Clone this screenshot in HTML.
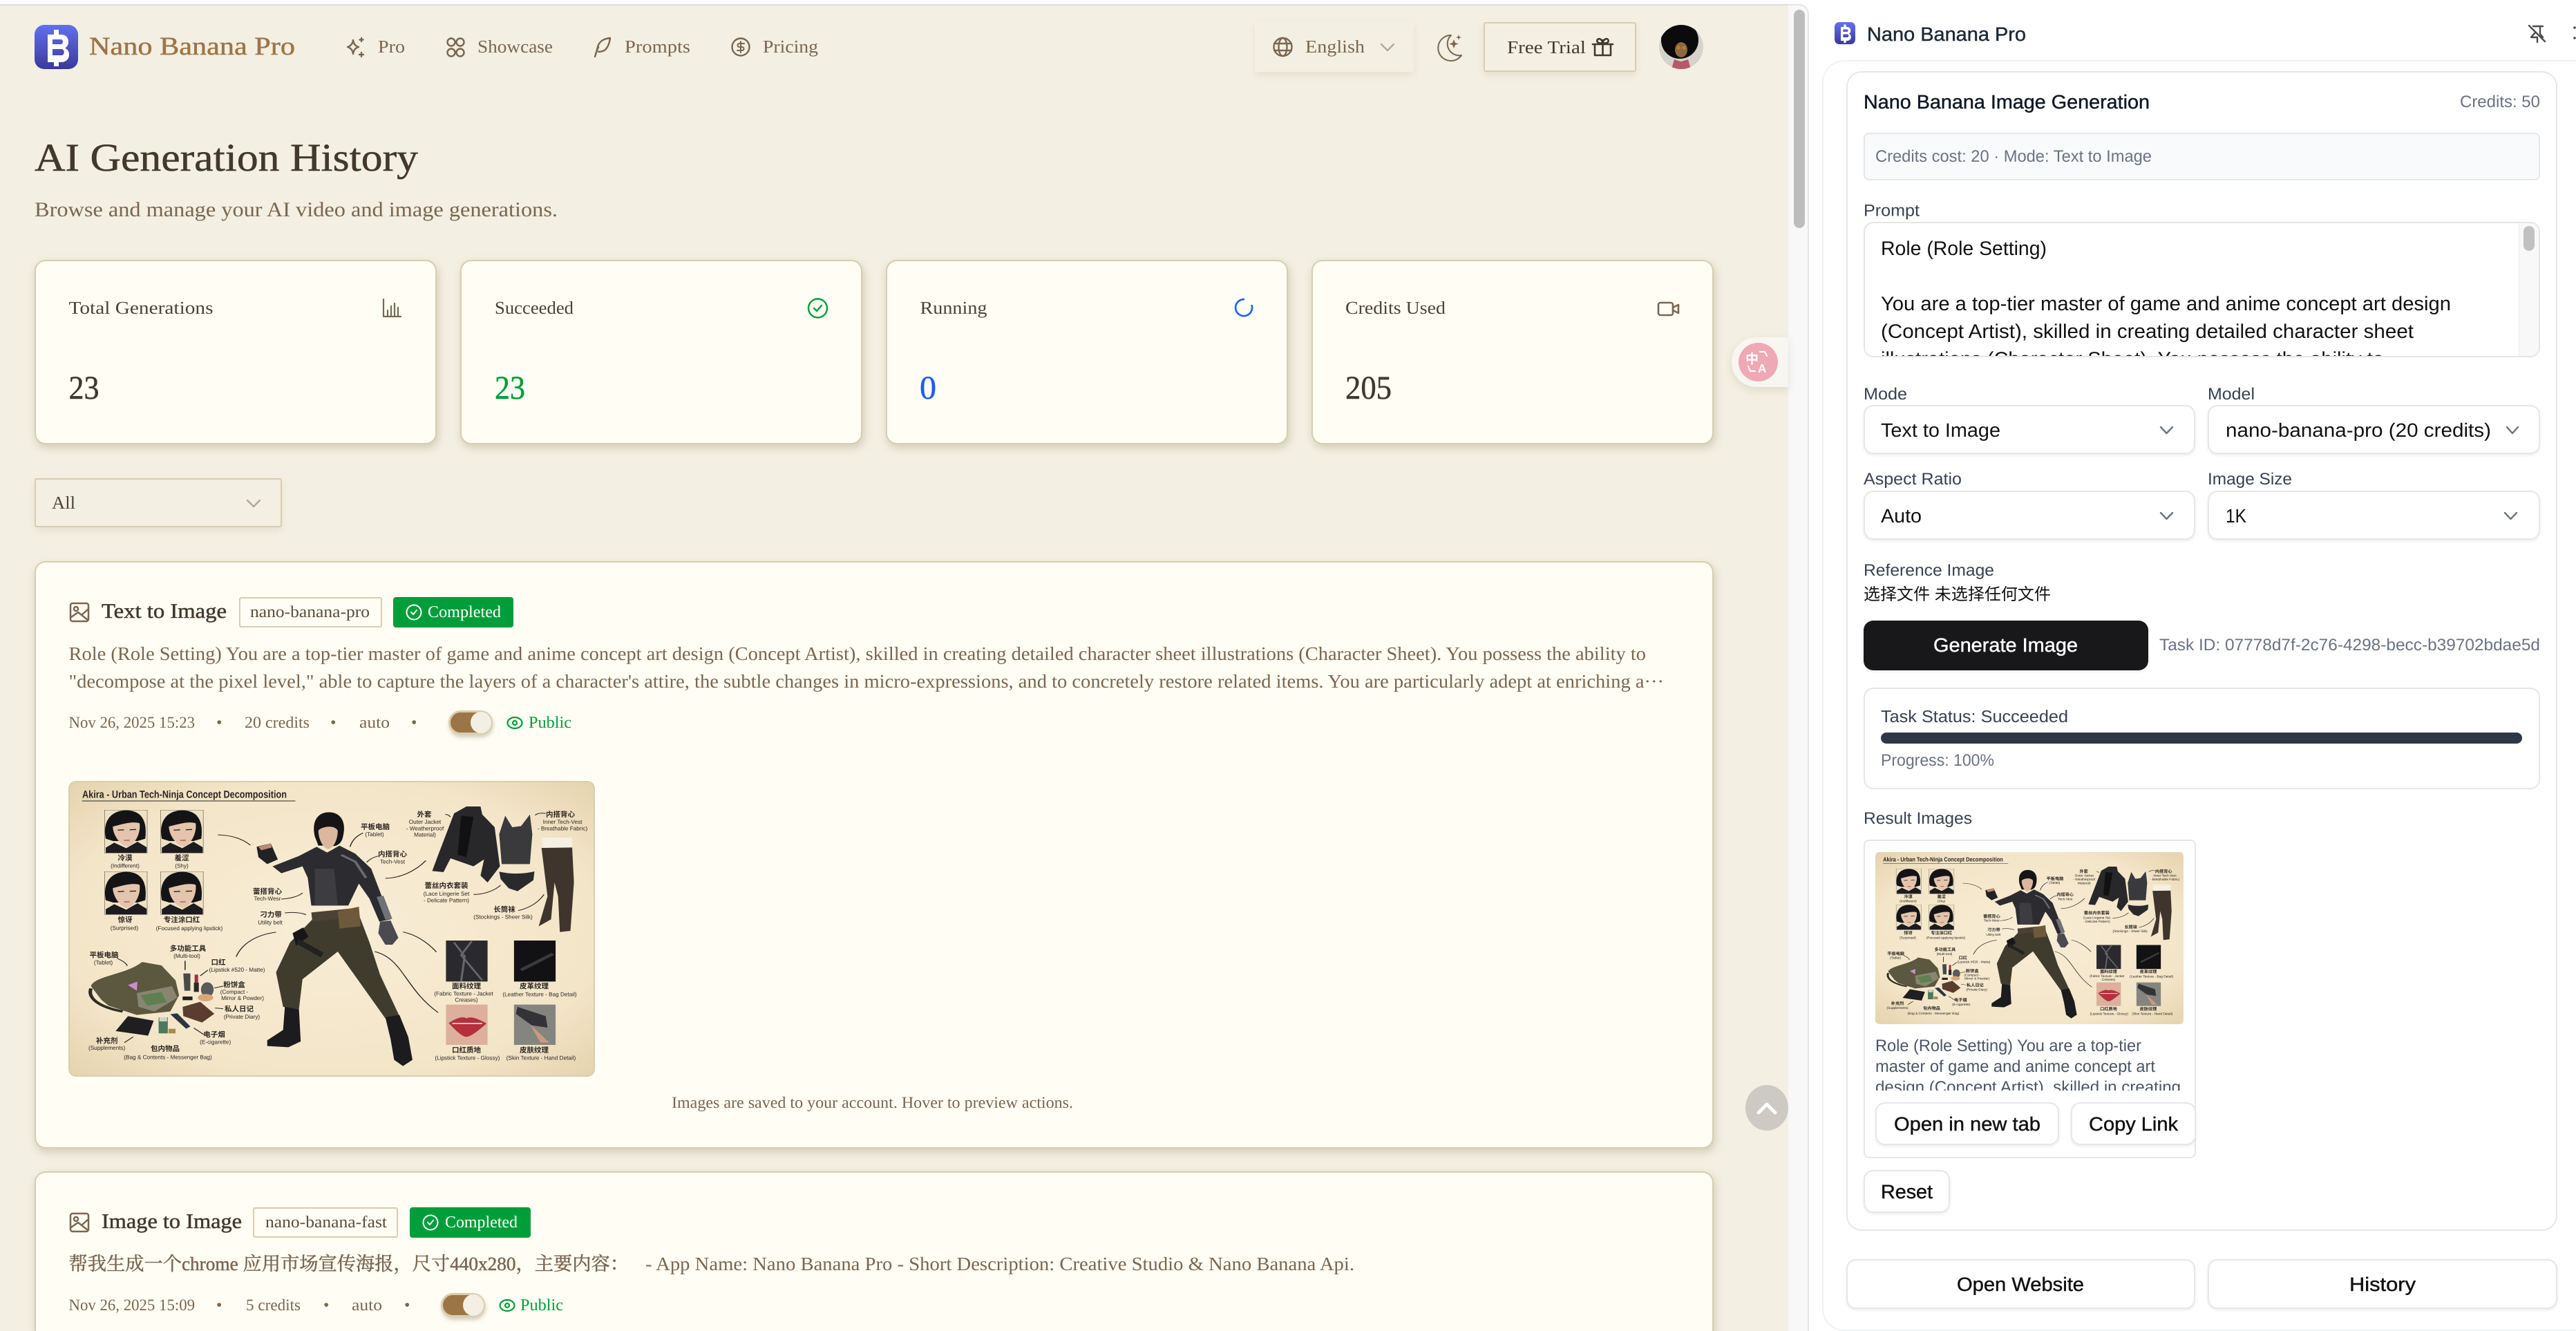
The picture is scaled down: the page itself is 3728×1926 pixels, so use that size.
<!DOCTYPE html>
<html lang="en"><head><meta charset="utf-8"><title>AI Generation History</title>
<style>
html,body{margin:0;padding:0;width:3728px;height:1926px;overflow:hidden;background:#fff}
.root{position:relative;width:3728px;height:1926px;overflow:hidden;contain:paint}
.b{position:absolute;box-sizing:border-box}
.c{background:#fffdf4;border:2px solid #d9cdb0;border-radius:16px;box-shadow:2px 5px 12px rgba(120,100,60,.26)}
.t{background:#fff;border:2px solid #e5e7eb;border-radius:14px}
.s2{box-shadow:0 2px 4px rgba(0,0,0,.08)}
svg.o{position:absolute;left:0;top:0}
text{text-rendering:geometricPrecision;white-space:pre}
.f{font-family:"Liberation Serif","Noto Serif CJK SC",serif}
.a{font-family:"Liberation Sans","Noto Sans CJK SC",sans-serif}
.m{stroke-width:.45px}
.h{stroke-width:.5px}
.ill text{font-family:"Liberation Sans","Noto Sans CJK SC",sans-serif;fill:#2b2620;text-anchor:middle;font-size:8.2px}
.ill text.z{font-size:10.5px;font-weight:bold}
.ic{fill:none;stroke-linecap:round;stroke-linejoin:round}
</style></head><body>
<div class="root">
<!-- page frame -->
<div class="b" style="left:0;top:6px;width:2600px;height:2px;background:#e0e0e0"></div>
<div class="b" style="left:0;top:8px;width:2588px;height:1918px;background:#f3efe2"></div>
<div class="b" style="left:2588px;top:6px;width:30px;height:1920px;background:#f8f8f8;border-right:2px solid #e6e6e6;border-top:2px solid #e6e6e6;border-top-right-radius:14px"></div>
<div class="b" style="left:2596px;top:14px;width:16px;height:316px;background:#bdbdbd;border-radius:8px"></div>
<!-- header buttons -->
<div class="b" style="left:1816px;top:32px;width:230px;height:72px;background:#f3efe2;border-radius:4px;box-shadow:0 5px 10px rgba(120,100,60,.1)"></div>
<div class="b" style="left:2147px;top:32px;width:221px;height:72px;background:#f3efe2;border:2px solid #d9cdb0;border-radius:3px;box-shadow:0 5px 10px rgba(120,100,60,.1)"></div>
<!-- stat cards -->
<div class="b c" style="left:50px;top:376px;width:582px;height:267px"></div>
<div class="b c" style="left:666px;top:376px;width:582px;height:267px"></div>
<div class="b c" style="left:1282px;top:376px;width:582px;height:267px"></div>
<div class="b c" style="left:1898px;top:376px;width:582px;height:267px"></div>
<div class="b" style="left:50px;top:692px;width:358px;height:71px;background:#f3efe2;border:2px solid #d9cdb0;border-radius:3px;box-shadow:0 5px 10px rgba(120,100,60,.1)"></div>
<!-- history cards -->
<div class="b c" style="left:50px;top:812px;width:2430px;height:850px"></div>
<div class="b c" style="left:50px;top:1695px;width:2430px;height:231px;border-bottom:none;border-radius:16px 16px 0 0"></div>
<div class="b" style="left:346px;top:864px;width:207px;height:44px;border:2px solid #d9cdb0;border-radius:3px;background:#fffdf4"></div>
<div class="b" style="left:569px;top:864px;width:174px;height:44px;background:#009e3a;border-radius:4px"></div>
<div class="b" style="left:366px;top:1747px;width:210px;height:44px;border:2px solid #d9cdb0;border-radius:3px;background:#fffdf4"></div>
<div class="b" style="left:593px;top:1747px;width:175px;height:44px;background:#009e3a;border-radius:4px"></div>
<!-- toggles -->
<div class="b" style="left:649px;top:1028px;width:64px;height:35px;background:#9c7547;border:3px solid #d9cdb0;border-radius:18px;box-shadow:1px 4px 6px rgba(120,100,60,.3)"></div>
<div class="b" style="left:681px;top:1030px;width:30px;height:31px;background:#f3efe2;border-radius:50%"></div>
<div class="b" style="left:638px;top:1871px;width:64px;height:35px;background:#9c7547;border:3px solid #d9cdb0;border-radius:18px;box-shadow:1px 4px 6px rgba(120,100,60,.3)"></div>
<div class="b" style="left:670px;top:1873px;width:30px;height:31px;background:#f3efe2;border-radius:50%"></div>
<!-- floating -->
<div class="b" style="left:2506px;top:488px;width:82px;height:72px;background:#f7f6f1;border-radius:36px 0 0 36px;box-shadow:0 5px 12px rgba(120,100,60,.14)"></div>
<div class="b" style="left:2516px;top:496px;width:57px;height:56px;background:#eea9b5;border-radius:50%"></div>
<div class="b" style="left:2526px;top:1570px;width:62px;height:66px;background:#cdcac4;border-radius:50%"></div>
<!-- side panel boxes -->
<div class="b" style="left:2637px;top:87px;width:1091px;height:1839px;border:2px solid #eef2f8;border-right:none;border-radius:32px 0 0 32px"></div>
<div class="b t" style="left:2672px;top:103px;width:1029px;height:1678px;border-radius:22px"></div>
<div class="b" style="left:2697px;top:192px;width:979px;height:69px;background:#f9fafb;border:2px solid #e5e7eb;border-radius:8px"></div>
<div class="b" style="left:2697px;top:321px;width:979px;height:196px;border:2px solid #e5e5e5;border-radius:14px;overflow:hidden"><div style="position:absolute;right:0;top:0;width:28px;height:100%;background:#f8f8f8;border-left:1px solid #ececec"></div><div style="position:absolute;left:953px;top:4px;width:16px;height:36px;background:#c1c1c1;border-radius:8px"></div></div>
<div class="b t s2" style="left:2697px;top:586px;width:480px;height:71px"></div>
<div class="b t s2" style="left:3195px;top:586px;width:481px;height:71px"></div>
<div class="b t s2" style="left:2697px;top:710px;width:480px;height:71px"></div>
<div class="b t s2" style="left:3195px;top:710px;width:481px;height:71px"></div>
<div class="b s2" style="left:2697px;top:898px;width:412px;height:72px;background:#18181a;border-radius:14px"></div>
<div class="b t" style="left:2697px;top:995px;width:979px;height:147px"></div>
<div class="b" style="left:2722px;top:1060px;width:928px;height:16px;background:#2d3748;border-radius:8px"></div>
<div class="b t" style="left:2697px;top:1215px;width:481px;height:461px;border-radius:8px"></div>
<div class="b t s2" style="left:2714px;top:1595px;width:266px;height:62px"></div>
<div class="b t s2" style="left:2997px;top:1595px;width:181px;height:62px"></div>
<div class="b t s2" style="left:2697px;top:1693px;width:125px;height:62px"></div>
<div class="b t s2" style="left:2672px;top:1822px;width:505px;height:72px"></div>
<div class="b t s2" style="left:3195px;top:1822px;width:506px;height:72px"></div>

<svg class="o" width="3728" height="1926" viewBox="0 0 3728 1926" xmlns="http://www.w3.org/2000/svg">
<defs>
<linearGradient id="lg" x1="0" y1="0" x2="0" y2="1"><stop offset="0" stop-color="#6270ee"/><stop offset="1" stop-color="#3b3a9a"/></linearGradient>
<radialGradient id="pg" cx=".5" cy=".5" r=".72"><stop offset="0" stop-color="#f8edd6"/><stop offset=".7" stop-color="#f3e5c8"/><stop offset="1" stop-color="#e4d2ac"/></radialGradient>
<clipPath id="ca"><circle cx="2433" cy="68" r="32"/></clipPath>
<clipPath id="cp"><rect x="2700" y="325" width="940" height="190"/></clipPath>
<clipPath id="cr"><rect x="2710" y="1490" width="460" height="88"/></clipPath>
<clipPath id="rr"><rect x="0" y="0" width="760" height="426" rx="10"/></clipPath>
<symbol id="logo" viewBox="0 0 63 64" preserveAspectRatio="none">
<rect width="63" height="64" rx="14" fill="url(#lg)"/>
<path fill="#fff" fill-rule="evenodd" d="M28 7h7v7h3c8 0 11 5 11 11 0 4-2 7-5 8.500 4 2 6 5 6 9.500 0 7-5 11-12 11h-3v6h-7v-6H19V14h9zM26 21v7h12c4 0 4-7 0-7zM26 35v9h13c5 0 5-9 0-9z"/>
</symbol>
<symbol id="face" viewBox="0 0 122 187" preserveAspectRatio="none">
<rect width="122" height="187" fill="#efe1c4" stroke="#3a3630" stroke-width="2"/>
<path d="M4 125C-6 50 18 2 62 2c46 0 60 50 54 123l-22 10H25z" fill="#141416"/>
<path d="M24 72C42 66 78 46 100 58c4 44-14 96-36 100-20-4-40-52-40-86z" fill="#e5c4ac"/>
<path d="M38 88l18-2 M72 86l18-1" stroke="#2a2420" stroke-width="4" fill="none"/>
<path d="M56 132l16 0" stroke="#a84e4e" stroke-width="4"/>
<path d="M4 187V164l24-22 34 24 32-28 26 24v25z" fill="#1c1c1f"/>
</symbol>
<symbol id="ill" viewBox="0 0 760 426" preserveAspectRatio="none">
<g clip-path="url(#rr)" class="ill">
<rect width="760" height="426" fill="url(#pg)"/>
<g transform="scale(.5102 .33333) translate(-38 -62)">
<path d="M75 146H680" stroke="#2b2620" stroke-width="3" fill="none"/>
<use href="#face" x="138" y="185" width="122" height="187"/>
<use href="#face" x="297" y="185" width="122" height="187"/>
<use href="#face" x="138" y="452" width="122" height="187"/>
<use href="#face" x="297" y="452" width="122" height="187"/>
<g fill="none" stroke="#2b2620" stroke-width="3">
<path d="M552 338C530 310 500 295 460 293"/><path d="M872 285C850 300 840 320 835 345"/><path d="M915 385C900 390 890 400 882 412"/><path d="M935 482C980 480 1020 450 1050 405"/><path d="M640 572C665 570 690 560 700 545"/><path d="M650 632C675 628 695 630 710 640"/><path d="M625 716C575 725 530 760 512 822"/><path d="M985 715C1020 725 1055 760 1080 802"/><path d="M905 800C985 830 990 960 1085 1065"/><path d="M1105 205C1115 205 1115 210 1120 215"/><path d="M1390 200C1375 197 1365 200 1360 208"/><path d="M1185 552C1215 552 1245 535 1262 512"/><path d="M1312 622C1345 610 1370 585 1385 552"/><path d="M175 830C190 840 200 850 203 862"/><path d="M367 840V880"/><path d="M432 880L410 905"/><path d="M475 950L450 958"/><path d="M475 1048L452 1045"/><path d="M420 1160L392 1132"/><path d="M195 1195L220 1170"/>
</g>
<path d="M735 300C725 230 745 195 775 195c35 0 50 45 40 105-5 40-25 45-35 40h-35z" fill="#151517"/>
<path d="M745 275c5-15 45-30 55 0 0 45-15 80-28 80-14-5-27-45-27-80z" fill="#dcb79d"/>
<path d="M740 345l30 25 35-30 45 35 45 65 25 100 30 120-32 10-28-100-30-65-30 95H725l-10-120-15-50-60 30-25-30 75-45z" fill="#2c2c30"/>
<path d="M735 440h55l10 160h-65z" fill="#3c3c41"/><path d="M810 380l40 30 30 70" stroke="#6a6a70" stroke-width="8" fill="none"/><path d="M920 560l25 100" stroke="#70727a" stroke-width="20" fill="none"/>
<path d="M570 345l40-15 20 70-30 20-25-30z" fill="#222"/><path d="M575 345l35-15 3 18-30 12z" fill="#b98d78"/>
<path d="M728 660l132-20 30 120 30 140 55 180-40 10-65-140-70-150-100 120-10 130-45-10-20-150 40-130z" fill="#3f3c2e"/>
<path d="M725 630l130-20 5 40-132 20z" fill="#4a4234"/><path d="M800 625l60-20 5 85-60 10z" fill="#6e5a3a"/>
<path d="M672 720l30-25 15 40-35 40z" fill="#17171a"/><path d="M690 745l70 60-8 20-70-60z" fill="#222"/>
<path d="M650 1040l40 10 5 140-35 25-60-5v-25l45-45z" fill="#1c1c1e"/>
<path d="M935 1085l40-10 25 95 12 100-27 27-25-27-10-90z" fill="#1c1c1e"/>
<path d="M920 670l30-5 22 75-17 30h-20l-20-50z" fill="#4a4a50"/>
<path d="M1130 200l35-30h40l5 35 35 55 15 170-35 70-20-30 10-70-30 30-65-35-20 60-32-5 17-70z" fill="#28282b"/><path d="M1150 210l35 5-20 175-25-10z" fill="#111"/>
<path d="M1275 210l20 50 25-5 25-50 7 85-7 130h-80l-7-130z" fill="#3a3a3c"/>
<path d="M1258 453q52 17 100-1l-3 38-45 48-25-13-23-40z" fill="#2a2a2c"/>
<path d="M1380 305h85v45h-85z" fill="#f6f0e3"/><path d="M1378 350l87-2 5 152-10 210-30 5-5-155-10-60-10 160-35 30 25-130z" fill="#3f352c"/>
<rect x="1107" y="752" width="118" height="178" fill="#2a2a2e"/><path d="M1130 760l30 60-10 110M1180 755l-30 60 60 110" stroke="#66666c" stroke-width="6" fill="none"/>
<rect x="1300" y="752" width="118" height="178" fill="#121214"/><path d="M1320 880L1410 810" stroke="#3a3a3e" stroke-width="12"/>
<rect x="1107" y="1030" width="118" height="175" fill="#dcb09c"/><path d="M1115 1110q35-35 50-20 15-15 57 22-42 58-57 58-15 0-50-60z" fill="#b5303c"/><path d="M1125 1112h85" stroke="#f3d8d8" stroke-width="5"/>
<rect x="1300" y="1030" width="118" height="175" fill="#858580"/><path d="M1345 1115l55 80-25 0z" fill="#c99a80"/><path d="M1310 1040l80 40 5 50-45-10-45-50z" fill="#333337"/>
<path d="M100 950c10-45 100-50 145-105l55 15 40 65 10 65-25 70-95 15-80-40-20-25z" fill="#5c573f"/>
<path d="M230 980l100-30 15 50-65 60-45-20z" fill="#8a8570"/><path d="M240 990l60-15 15 45-55 15z" fill="#5f7f52"/><path d="M205 945l27-15-2 40z" fill="#c88fc8"/>
<path d="M100 960c-10 40 20 80 90 100" stroke="#2f2c22" stroke-width="10" fill="none"/>
<path d="M362 895h20v75h-17z" fill="#4a4a4a"/><path d="M392 935h14v40h-14z" fill="#2a2a2a"/><path d="M394 900h10v35h-10z" fill="#a03040"/>
<ellipse cx="430" cy="965" rx="18" ry="32" fill="#5a5a5a"/><ellipse cx="425" cy="1000" rx="22" ry="16" fill="#d9a87a"/>
<path d="M360 1040l50-22 40 52-35 38-53-28z" fill="#5a3d2e"/><path d="M170 1145l35-65 73 20-16 65z" fill="#1f1f22"/>
<rect x="292" y="1085" width="26" height="70" fill="#4c7a5a"/><rect x="294" y="1085" width="22" height="18" fill="#cfd2c8"/>
<path d="M325 1072l20-4 37 57-12 10z" fill="#2a3544"/><path d="M320 1135h20v20h-20z" fill="#a98a4f"/><path d="M360 995h28v16h-28z" fill="#222"/>
</g>
<text x="19" y="23.500" style="text-anchor:start;font-size:15px" font-weight="bold" textLength="296" lengthAdjust="spacingAndGlyphs">Akira - Urban Tech-Ninja Concept Decomposition</text>
<text class="z" x="81" y="114">冷漠</text><text x="81" y="124.300">(Indifferent)</text>
<text class="z" x="163" y="114">羞涩</text><text x="163" y="124.300">(Shy)</text>
<text class="z" x="81" y="203.700">惊讶</text><text x="80" y="214.300">(Surprised)</text>
<text class="z" x="163" y="203.700">专注涂口红</text><text x="174" y="215">(Focused applying lipstick)</text>
<text class="z" x="443" y="69">平板电脑</text><text x="442" y="79">(Tablet)</text>
<text class="z" x="468" y="108.500">内搭背心</text><text x="468" y="118.700">Tech-Vest</text>
<text class="z" x="514" y="51">外套</text><text x="515" y="61">Outer Jacket</text><text x="515" y="70.300">- Weatherproof</text><text x="515" y="79.300">Material)</text>
<text class="z" x="711" y="51">内搭背心</text><text x="714" y="61">Inner Tech-Vest</text><text x="714" y="70.300">- Breathable Fabric)</text>
<text class="z" x="546" y="154">蕾丝内衣套装</text><text x="546" y="165">(Lace Lingerie Set</text><text x="546" y="174.300">- Delicate Pattern)</text>
<text class="z" x="630" y="188.700">长筒袜</text><text x="628" y="198.300">(Stockings - Sheer Silk)</text>
<text class="z" x="287" y="162.700">蕾搭背心</text><text x="287" y="172">Tech-Wesr</text>
<text class="z" x="292" y="196">刁力带</text><text x="291" y="206.700">Utility belt</text>
<text class="z" x="172" y="245">多功能工具</text><text x="170.500" y="255">(Multi-tool)</text>
<text class="z" x="50.500" y="254.700">平板电脑</text><text x="49.500" y="264.700">(Tablet)</text>
<text class="z" x="216" y="265">口红</text><text x="243" y="275">(Lipstick #520 - Matte)</text>
<text class="z" x="239" y="297.700">粉饼盒</text><text x="239" y="307">(Compact -</text><text x="251" y="316">Mirror &amp; Powder)</text>
<text class="z" x="246" y="332.700">私人日记</text><text x="250" y="343">(Private Diary)</text>
<text class="z" x="210" y="369.300">电子烟</text><text x="211.700" y="379.700">(E-cigarette)</text>
<text class="z" x="54.600" y="378.300">补充剂</text><text x="54.600" y="388">(Supplements)</text>
<text class="z" x="139" y="390">包内物品</text><text x="143" y="401.700">(Bag &amp; Contents - Messenger Bag)</text>
<text class="z" x="575" y="299.300">面料纹理</text><text x="571" y="309.300">(Fabric Texture - Jacket</text><text x="575" y="318.300">Creases)</text>
<text class="z" x="673" y="299.300">皮革纹理</text><text x="681" y="310.300">(Leather Texture - Bag Detail)</text>
<text class="z" x="575" y="392">口红质地</text><text x="576.400" y="402.700">(Lipstick Texture - Glossy)</text>
<text class="z" x="673" y="392">皮肤纹理</text><text x="683" y="402.700">(Skin Texture - Hand Detail)</text>
</g>
</symbol>
</defs>

<!-- header left -->
<use href="#logo" x="50" y="36" width="63" height="64"/>
<text class="f h" x="129" y="79" font-size="37" fill="#9c7547" stroke="#9c7547" textLength="298" lengthAdjust="spacingAndGlyphs">Nano Banana Pro</text>
<g class="ic" stroke="#7a6650" stroke-width="2.400">
<path d="M511 58q1 8 8 10-7 2-8 10-1-8-8-10 7-2 8-10z"/><path d="M523 55v5M520.500 57.500h5M523 76v6M520 79h6"/>
<circle cx="653" cy="61" r="5.500"/><circle cx="666" cy="61" r="5.500"/><circle cx="653" cy="76" r="5.500"/><circle cx="666" cy="76" r="5.500"/>
<path d="M861 82c3-8 3-12 5-17 3-6 8-9 17-10-1 8-3 13-7 17-3 2-6 3-10 3M866 68l-4 10"/>
<circle cx="1072" cy="68" r="12.500"/><path d="M1077 63h-7a2.500 2.500 0 0 0 0 5h4a2.500 2.500 0 0 1 0 5h-7M1072 60v16" stroke-width="2"/>
<circle cx="1856.500" cy="68" r="13"/><ellipse cx="1856.500" cy="68" rx="6" ry="13"/><path d="M1844 63h25M1844 73h25"/>
<path d="M2100 51a18.500 18.500 0 1 0 15 29 17 17 0 0 1-15-29z" stroke-width="2"/>
</g>
<path d="M2104 57l2 5 5 1.500-5 1.500-2 5-2-5-5-1.500 5-1.500z" fill="#7a6650"/><path d="M2111 50l1 3 3 1-3 1-1 3-1-3-3-1 3-1z" fill="#7a6650"/>
<text class="f" x="547" y="76" font-size="26" fill="#7a6650" textLength="39" lengthAdjust="spacingAndGlyphs">Pro</text>
<text class="f" x="691" y="76" font-size="26" fill="#7a6650" textLength="109" lengthAdjust="spacingAndGlyphs">Showcase</text>
<text class="f" x="904" y="76" font-size="26" fill="#7a6650" textLength="95" lengthAdjust="spacingAndGlyphs">Prompts</text>
<text class="f" x="1104" y="76" font-size="26" fill="#7a6650" textLength="80" lengthAdjust="spacingAndGlyphs">Pricing</text>
<text class="f" x="1889" y="76" font-size="26" fill="#7a6650" textLength="86" lengthAdjust="spacingAndGlyphs">English</text>
<path class="ic" d="M1999 64l9 9 9-9" stroke="#b3a899" stroke-width="2.400"/>
<text class="f" x="2181" y="77" font-size="26" fill="#433a2e" textLength="114" lengthAdjust="spacingAndGlyphs">Free Trial</text>
<g class="ic" stroke="#42382c" stroke-width="2.600"><path d="M2305 64h29M2308 64v16h23V64M2319.500 58v22M2319.500 62c-7 2-9-2-8-4 2-4 7-1 8 4 1-5 6-8 8-4 1 2-1 6-8 4z"/></g>
<g clip-path="url(#ca)"><rect x="2401" y="36" width="64" height="64" fill="#d5d3cb"/><ellipse cx="2431" cy="58" rx="27" ry="27" fill="#0b0b0c"/><ellipse cx="2433" cy="72" rx="9" ry="11" fill="#8a6a40"/><circle cx="2429" cy="69" r="2.600" fill="#c87a20"/><circle cx="2437" cy="69" r="2.600" fill="#c87a20"/><path d="M2419 100l4-14 10 3 10-3 4 14z" fill="#b55a6c"/></g>

<!-- title -->
<text class="f h" x="50" y="247" font-size="57" fill="#42382c" stroke="#42382c" textLength="555" lengthAdjust="spacingAndGlyphs">AI Generation History</text>
<text class="f" x="50" y="313" font-size="30" fill="#7a6650" textLength="757" lengthAdjust="spacingAndGlyphs">Browse and manage your AI video and image generations.</text>

<!-- stats -->
<text class="f" x="99.500" y="454" font-size="26" fill="#4d4235" textLength="209" lengthAdjust="spacingAndGlyphs">Total Generations</text>
<text class="f" x="716" y="454" font-size="26" fill="#4d4235" textLength="114" lengthAdjust="spacingAndGlyphs">Succeeded</text>
<text class="f" x="1331.500" y="454" font-size="26" fill="#4d4235" textLength="97" lengthAdjust="spacingAndGlyphs">Running</text>
<text class="f" x="1947" y="454" font-size="26" fill="#4d4235" textLength="145" lengthAdjust="spacingAndGlyphs">Credits Used</text>
<text class="f h" x="99.500" y="577" font-size="48" fill="#42382c" stroke="#42382c" textLength="44" lengthAdjust="spacingAndGlyphs">23</text>
<text class="f h" x="716" y="577" font-size="48" fill="#009e3a" stroke="#009e3a" textLength="44" lengthAdjust="spacingAndGlyphs">23</text>
<text class="f h" x="1331" y="577" font-size="48" fill="#1d5cf5" stroke="#1d5cf5">0</text>
<text class="f h" x="1947" y="577" font-size="48" fill="#42382c" stroke="#42382c" textLength="67" lengthAdjust="spacingAndGlyphs">205</text>
<path class="ic" d="M555 433v25h25M561 456v-7M566 456v-13M571 456v-17M576 456v-11" stroke="#7a6650" stroke-width="2.200"/>
<circle class="ic" cx="1183.500" cy="446" r="13.500" stroke="#009e3a" stroke-width="2.400"/><path class="ic" d="M1178 446l4 4 7-8" stroke="#009e3a" stroke-width="2.400"/>
<path class="ic" d="M1802 433.500a12 12 0 1 0 10 11" transform="rotate(-10 1799 445)" stroke="#1d5cf5" stroke-width="2.600"/>
<g class="ic" stroke="#7a6650" stroke-width="2.600"><rect x="2400" y="438" width="21" height="18" rx="3"/><path d="M2421 445l8-4v12l-8-4z"/></g>
<text class="f" x="75" y="736" font-size="26" fill="#4d4235" textLength="34" lengthAdjust="spacingAndGlyphs">All</text>
<path class="ic" d="M358 724l9 9 9-9" stroke="#b3a899" stroke-width="2.400"/>

<!-- card 1 -->
<g class="ic" stroke="#7a6650" stroke-width="2.500"><rect x="102" y="873" width="26" height="26" rx="3"/><circle cx="110" cy="881" r="3"/><path d="M103 893l10-7 14 11M118 890l9-8"/></g>
<text class="f h" x="147" y="894" font-size="30" fill="#42382c" stroke="#42382c" textLength="181" lengthAdjust="spacingAndGlyphs">Text to Image</text>
<text class="f" x="362" y="893" font-size="24" fill="#5a4d3c" textLength="173" lengthAdjust="spacingAndGlyphs">nano-banana-pro</text>
<circle class="ic" cx="599" cy="886" r="10.500" stroke="#fff" stroke-width="2"/><path class="ic" d="M595 886l3 3 5-6" stroke="#fff" stroke-width="2"/>
<text class="f" x="619" y="893" font-size="24" fill="#fff" textLength="106" lengthAdjust="spacingAndGlyphs">Completed</text>
<text class="f" x="99.500" y="955" font-size="27.500" fill="#7a6650" textLength="2282.500" lengthAdjust="spacingAndGlyphs">Role (Role Setting) You are a top-tier master of game and anime concept art design (Concept Artist), skilled in creating detailed character sheet illustrations (Character Sheet). You possess the ability to</text>
<text class="f" x="99.500" y="995" font-size="27.500" fill="#7a6650" textLength="2308.500" lengthAdjust="spacingAndGlyphs">"decompose at the pixel level," able to capture the layers of a character's attire, the subtle changes in micro-expressions, and to concretely restore related items. You are particularly adept at enriching a···</text>
<text class="f" x="99.500" y="1053" font-size="23.500" fill="#7a6650" textLength="182.500" lengthAdjust="spacingAndGlyphs">Nov 26, 2025 15:23</text>
<text class="f" x="313" y="1053" font-size="24" fill="#7a6650">•</text>
<text class="f" x="354" y="1053" font-size="23.500" fill="#7a6650" textLength="94" lengthAdjust="spacingAndGlyphs">20 credits</text>
<text class="f" x="478" y="1053" font-size="24" fill="#7a6650">•</text>
<text class="f" x="520" y="1053" font-size="23.500" fill="#7a6650" textLength="44" lengthAdjust="spacingAndGlyphs">auto</text>
<text class="f" x="595" y="1053" font-size="24" fill="#7a6650">•</text>
<g class="ic" stroke="#009e3a" stroke-width="2.200"><ellipse cx="745" cy="1046" rx="10.500" ry="8"/><circle cx="745" cy="1046" r="3"/></g>
<text class="f" x="765" y="1053" font-size="24" fill="#009e3a" textLength="62" lengthAdjust="spacingAndGlyphs">Public</text>
<use href="#ill" x="100" y="1131" width="760" height="426"/>
<rect x="100" y="1131" width="760" height="426" rx="10" fill="none" stroke="#d9cdb0" stroke-width="2"/>
<text class="f" x="972" y="1603" font-size="23.500" fill="#7a6650" textLength="581" lengthAdjust="spacingAndGlyphs">Images are saved to your account. Hover to preview actions.</text>

<!-- card 2 -->
<g class="ic" stroke="#7a6650" stroke-width="2.500"><rect x="102" y="1756" width="26" height="26" rx="3"/><circle cx="110" cy="1764" r="3"/><path d="M103 1776l10-7 14 11M118 1773l9-8"/></g>
<text class="f h" x="147" y="1777" font-size="30" fill="#42382c" stroke="#42382c" textLength="203" lengthAdjust="spacingAndGlyphs">Image to Image</text>
<text class="f" x="384" y="1776" font-size="24" fill="#5a4d3c" textLength="176" lengthAdjust="spacingAndGlyphs">nano-banana-fast</text>
<circle class="ic" cx="623" cy="1769" r="10.500" stroke="#fff" stroke-width="2"/><path class="ic" d="M619 1769l3 3 5-6" stroke="#fff" stroke-width="2"/>
<text class="f" x="644" y="1776" font-size="24" fill="#fff" textLength="105" lengthAdjust="spacingAndGlyphs">Completed</text>
<text class="f h" x="99.500" y="1838" font-size="27.500" fill="#7a6650" stroke="#7a6650" textLength="810.500" lengthAdjust="spacingAndGlyphs">帮我生成一个chrome 应用市场宣传海报，尺寸440x280，主要内容：</text>
<text class="f" x="934" y="1838" font-size="27.500" fill="#7a6650" textLength="1026" lengthAdjust="spacingAndGlyphs">- App Name: Nano Banana Pro - Short Description: Creative Studio &amp; Nano Banana Api.</text>
<text class="f" x="99.500" y="1896" font-size="23.500" fill="#7a6650" textLength="182.500" lengthAdjust="spacingAndGlyphs">Nov 26, 2025 15:09</text>
<text class="f" x="313" y="1896" font-size="24" fill="#7a6650">•</text>
<text class="f" x="356" y="1896" font-size="23.500" fill="#7a6650" textLength="79" lengthAdjust="spacingAndGlyphs">5 credits</text>
<text class="f" x="468" y="1896" font-size="24" fill="#7a6650">•</text>
<text class="f" x="509" y="1896" font-size="23.500" fill="#7a6650" textLength="44" lengthAdjust="spacingAndGlyphs">auto</text>
<text class="f" x="585" y="1896" font-size="24" fill="#7a6650">•</text>
<g class="ic" stroke="#009e3a" stroke-width="2.200"><ellipse cx="734" cy="1889" rx="10.500" ry="8"/><circle cx="734" cy="1889" r="3"/></g>
<text class="f" x="753" y="1896" font-size="24" fill="#009e3a" textLength="62" lengthAdjust="spacingAndGlyphs">Public</text>

<!-- floating glyphs -->
<text class="a" x="2526" y="526" font-size="19" font-weight="bold" fill="#fff">中</text>
<text class="a" x="2544" y="539" font-size="17" font-weight="bold" fill="#fff">A</text>
<path class="ic" d="M2547 509h7l3 6M2530 530l3 7h7" stroke="#fff" stroke-width="2"/>
<path class="ic" d="M2545 1610l12-12 12 12" stroke="#fff" stroke-width="5"/>

<!-- panel header -->
<use href="#logo" x="2655" y="32" width="30" height="32"/>
<text class="a m" x="2702" y="59" font-size="28" fill="#1f2937" stroke="#1f2937" textLength="230" lengthAdjust="spacingAndGlyphs">Nano Banana Pro</text>
<g class="ic" stroke="#4b4b4b" stroke-width="2.400"><path d="M3660 37l23 23M3666 38h14M3676 38v11l4 5M3671 54h-8l6-7M3672 54v7"/></g>
<circle cx="3726" cy="40" r="1.800" fill="#4b4b4b"/><circle cx="3726" cy="55" r="1.800" fill="#4b4b4b"/>

<!-- panel body -->
<text class="a m" x="2697" y="157" font-size="28" fill="#111827" stroke="#111827" textLength="414" lengthAdjust="spacingAndGlyphs">Nano Banana Image Generation</text>
<text class="a" x="3560" y="155" font-size="24" fill="#6b7280" textLength="116" lengthAdjust="spacingAndGlyphs">Credits: 50</text>
<text class="a" x="2714" y="234" font-size="24" fill="#6b7280" textLength="400" lengthAdjust="spacingAndGlyphs">Credits cost: 20 · Mode: Text to Image</text>
<text class="a" x="2697" y="312.500" font-size="24" fill="#374151" textLength="81" lengthAdjust="spacingAndGlyphs">Prompt</text>
<g clip-path="url(#cp)">
<text class="a" x="2722" y="369" font-size="28.500" fill="#111" textLength="240" lengthAdjust="spacingAndGlyphs">Role (Role Setting)</text>
<text class="a" x="2722" y="449" font-size="28.500" fill="#111" textLength="825" lengthAdjust="spacingAndGlyphs">You are a top-tier master of game and anime concept art design</text>
<text class="a" x="2722" y="489" font-size="28.500" fill="#111" textLength="771" lengthAdjust="spacingAndGlyphs">(Concept Artist), skilled in creating detailed character sheet</text>
<text class="a" x="2722" y="529" font-size="28.500" fill="#111" textLength="728" lengthAdjust="spacingAndGlyphs">illustrations (Character Sheet). You possess the ability to</text>
</g>
<text class="a" x="2697" y="578" font-size="24" fill="#374151" textLength="63" lengthAdjust="spacingAndGlyphs">Mode</text>
<text class="a" x="3195" y="578" font-size="24" fill="#374151" textLength="68" lengthAdjust="spacingAndGlyphs">Model</text>
<text class="a" x="2722" y="632" font-size="28" fill="#111" textLength="173" lengthAdjust="spacingAndGlyphs">Text to Image</text>
<text class="a" x="3221" y="632" font-size="28" fill="#111" textLength="384" lengthAdjust="spacingAndGlyphs">nano-banana-pro (20 credits)</text>
<text class="a" x="2697" y="701" font-size="24" fill="#374151" textLength="142" lengthAdjust="spacingAndGlyphs">Aspect Ratio</text>
<text class="a" x="3195" y="701" font-size="24" fill="#374151" textLength="122" lengthAdjust="spacingAndGlyphs">Image Size</text>
<text class="a" x="2722" y="756" font-size="28" fill="#111" textLength="59" lengthAdjust="spacingAndGlyphs">Auto</text>
<text class="a" x="3221" y="756" font-size="28" fill="#111" textLength="30" lengthAdjust="spacingAndGlyphs">1K</text>
<g class="ic" stroke="#6b7280" stroke-width="2.400"><path d="M3127 618l8.500 9 8.500-9M3628 618l8 9 8-9M3127 742l8.500 9 8.500-9M3625 742l8.500 9 8.500-9"/></g>
<text class="a" x="2697" y="833" font-size="24" fill="#374151" textLength="189" lengthAdjust="spacingAndGlyphs">Reference Image</text>
<text class="a" x="2697" y="868" font-size="24" fill="#111" textLength="271" lengthAdjust="spacingAndGlyphs">选择文件 未选择任何文件</text>
<text class="a m" x="2798" y="943" font-size="28" fill="#fff" stroke="#fff" textLength="209" lengthAdjust="spacingAndGlyphs">Generate Image</text>
<text class="a" x="3125" y="941" font-size="24" fill="#6b7280" textLength="551" lengthAdjust="spacingAndGlyphs">Task ID: 07778d7f-2c76-4298-becc-b39702bdae5d</text>
<text class="a" x="2722" y="1045" font-size="24.500" fill="#374151" textLength="271" lengthAdjust="spacingAndGlyphs">Task Status: Succeeded</text>
<text class="a" x="2722" y="1108" font-size="24" fill="#6b7280" textLength="164" lengthAdjust="spacingAndGlyphs">Progress: 100%</text>
<text class="a" x="2697" y="1192" font-size="24" fill="#374151" textLength="157" lengthAdjust="spacingAndGlyphs">Result Images</text>
<use href="#ill" x="2714" y="1233" width="446" height="249"/>
<g clip-path="url(#cr)">
<text class="a" x="2714" y="1521" font-size="24" fill="#4b5563" textLength="385" lengthAdjust="spacingAndGlyphs">Role (Role Setting) You are a top-tier</text>
<text class="a" x="2714" y="1551" font-size="24" fill="#4b5563" textLength="405" lengthAdjust="spacingAndGlyphs">master of game and anime concept art</text>
<text class="a" x="2714" y="1581" font-size="24" fill="#4b5563" textLength="442" lengthAdjust="spacingAndGlyphs">design (Concept Artist), skilled in creating</text>
</g>
<text class="a m" x="2741" y="1636" font-size="28" fill="#111" stroke="#111" textLength="212" lengthAdjust="spacingAndGlyphs">Open in new tab</text>
<text class="a m" x="3023" y="1636" font-size="28" fill="#111" stroke="#111" textLength="129" lengthAdjust="spacingAndGlyphs">Copy Link</text>
<text class="a m" x="2722" y="1734" font-size="28" fill="#111" stroke="#111" textLength="75" lengthAdjust="spacingAndGlyphs">Reset</text>
<text class="a m" x="2832" y="1868" font-size="28" fill="#111" stroke="#111" textLength="184" lengthAdjust="spacingAndGlyphs">Open Website</text>
<text class="a m" x="3400" y="1868" font-size="28" fill="#111" stroke="#111" textLength="96" lengthAdjust="spacingAndGlyphs">History</text>
</svg>
</div>
</body></html>
